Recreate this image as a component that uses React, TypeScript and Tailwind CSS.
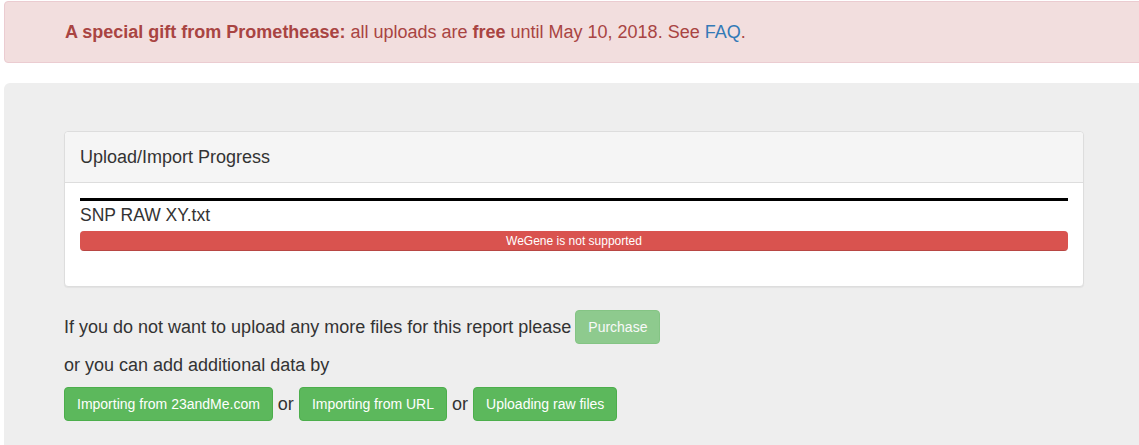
const FONT = { fontFamily: '"Liberation Sans", Arial, sans-serif' };

function GreenButton({ label, disabled }: { label: string; disabled?: boolean }) {
  return (
    <button
      className={
        "h-[34px] shrink-0 rounded-[4px] border border-[#4cae4c] bg-[#5cb85c] px-[12px] text-[14px] leading-[20px] text-white" +
        (disabled ? " opacity-65" : "")
      }
    >
      {label}
    </button>
  );
}

export default function App() {
  return (
    <div className="h-[445px] w-[1139px] overflow-hidden bg-white text-[18px] text-[#333]" style={FONT}>
      {/* Promo alert */}
      <div className="ml-[4px] mt-[1px] flex h-[62px] w-[1150px] items-center rounded-[4px] border border-[#ebccd1] bg-[#f2dede] pl-[60px] text-[#a94442]">
        <span>
          <b>A special gift from Promethease:</b> all uploads are <b>free</b> until May 10, 2018. See{" "}
          <a className="text-[#337ab7]">FAQ</a>.
        </span>
      </div>

      {/* Jumbotron */}
      <div className="ml-[4px] mt-[20px] h-[400px] w-[1150px] rounded-[6px] bg-[#eeeeee] pl-[60px] pt-[48px]">
        {/* Panel */}
        <div className="w-[1020px] rounded-[4px] border border-[#dddddd] bg-white shadow-[0_1px_1px_rgba(0,0,0,0.05)]">
          <div className="flex h-[51px] items-center rounded-t-[4px] border-b border-[#dddddd] bg-[#f5f5f5] px-[15px] text-[18px]">
            Upload/Import Progress
          </div>
          <div className="px-[15px] pb-[35px] pt-[15px]">
            <div className="h-[3px] bg-black" />
            <div className="mb-[4px] pt-[2px] text-[17.5px] leading-[24px]">SNP RAW XY.txt</div>
            <div className="h-[20px] overflow-hidden rounded-[4px] bg-[#f5f5f5] shadow-[inset_0_1px_2px_rgba(0,0,0,0.1)]">
              <div className="flex h-full w-full items-center justify-center bg-[#d9534f] text-[12px] leading-[20px] text-white shadow-[inset_0_-1px_0_rgba(0,0,0,0.15)]">
                WeGene is not supported
              </div>
            </div>
          </div>
        </div>

        {/* Next steps */}
        <div className="mt-[23px] flex h-[34px] items-center gap-[4px]">
          <span>If you do not want to upload any more files for this report please</span>
          <GreenButton label="Purchase" disabled />
        </div>
        <div className="mt-[7px] pt-[2px] leading-[24px]">or you can add additional data by</div>
        <div className="mt-[10px] flex h-[34px] items-center gap-[5px]">
          <GreenButton label="Importing from 23andMe.com" />
          <span>or</span>
          <GreenButton label="Importing from URL" />
          <span>or</span>
          <GreenButton label="Uploading raw files" />
        </div>
      </div>
    </div>
  );
}
